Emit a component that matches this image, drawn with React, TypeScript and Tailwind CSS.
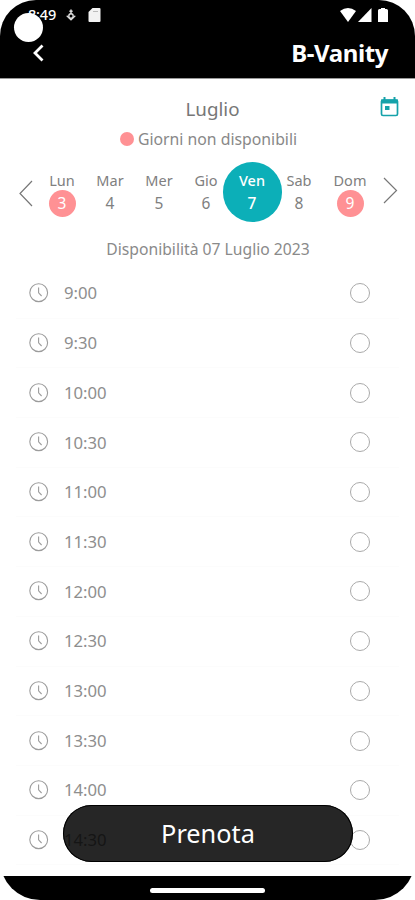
import React from "react";

type Day = { name: string; num: number; width: string; state?: "off" | "selected" };

const days: Day[] = [
  { name: "Lun", num: 3, width: "w-[48px]", state: "off" },
  { name: "Mar", num: 4, width: "w-[48px]" },
  { name: "Mer", num: 5, width: "w-[50px]" },
  { name: "Gio", num: 6, width: "w-[44px]" },
  { name: "Ven", num: 7, width: "w-[48px]", state: "selected" },
  { name: "Sab", num: 8, width: "w-[46px]" },
  { name: "Dom", num: 9, width: "w-[56px]", state: "off" },
];

const slots = ["9:00", "9:30", "10:00", "10:30", "11:00", "11:30", "12:00", "12:30", "13:00", "13:30", "14:00", "14:30"];

function StatusBar() {
  return (
    <div className="relative flex h-[30px] items-center pl-[28px] pr-[27px]">
      <span className="w-[29px] whitespace-nowrap pb-px text-[14.5px] leading-none font-medium tracking-[-0.2px]">8:49</span>
      <svg className="ml-[9px] h-[12px] w-[10px]" viewBox="0 0 10 12" fill="none" stroke="#ddd">
        <path d="M5 0.5V5M3.4 2.2h3.2" strokeWidth="1.5" />
        <circle cx="5" cy="7" r="2.2" strokeWidth="1.4" />
        <path d="M0.7 6.8L5 11L9.3 6.8" strokeWidth="1.2" />
      </svg>
      <svg className="ml-[12px] h-[14px] w-[13px]" viewBox="0 0 13 14">
        <path d="M4.5 0H11.5Q12.5 0 12.5 1V13Q12.5 14 11.5 14H1.5Q0.5 14 0.5 13V4Z" fill="#f2f2f2" />
        <path d="M5 3.5h5" stroke="#bbb" />
      </svg>
      <div className="ml-auto flex items-center">
        <svg className="h-[14px] w-[16px]" viewBox="0 0 16 14">
          <path d="M0 3Q8-3 16 3L8 14Z" fill="#fff" />
        </svg>
        <svg className="ml-[2px] h-[14px] w-[14px]" viewBox="0 0 14 14">
          <path d="M13.5 0V14H0Z" fill="#fff" />
        </svg>
        <svg className="ml-[6px] h-[14px] w-[10px]" viewBox="0 0 10 14">
          <path d="M3 0H7V1H8.5Q10 1 10 2.5V14H0V2.5Q0 1 1.5 1H3Z" fill="#fff" />
        </svg>
      </div>
      <div className="absolute left-[14px] top-[13px] h-[29px] w-[29px] rounded-full bg-white" />
    </div>
  );
}

function DayCell({ day }: { day: Day }) {
  const selected = day.state === "selected";
  return (
    <div className={`relative flex h-[60px] flex-col items-center ${day.width} ${selected ? "text-white" : "text-[#808080]"}`}>
      {selected && <div className="absolute left-[-5px] top-0 h-[60px] w-[59px] rounded-full bg-[#0cafb8]" />}
      <span className={`relative mt-[8px] text-[14.5px] leading-[20px] ${selected ? "font-medium" : ""}`}>{day.name}</span>
      <span
        className={`relative flex h-[27px] w-[27px] items-center justify-center rounded-full pt-px text-[15.5px] leading-none ${
          day.state === "off" ? "bg-[#ff9194] text-white" : ""
        } ${selected ? "font-medium" : ""}`}
      >
        {day.num}
      </span>
    </div>
  );
}

function SlotRow({ time }: { time: string }) {
  return (
    <div className="mx-[16px] flex h-[49.7px] items-center border-b border-[#fcfcfc] pl-[13px] pr-[29px]">
      <svg className="h-[20px] w-[20px]" viewBox="0 0 20 20" fill="none" stroke="#9c9c9c" strokeWidth="1.1">
        <circle cx="9.7" cy="9.7" r="8.9" />
        <path d="M9.6 4.5V9.8L12.6 13" />
      </svg>
      <span className="ml-[15px] pt-px text-[16.7px] leading-none text-[#8e8e8e]">{time}</span>
      <span className="ml-auto h-[20px] w-[20px] rounded-full border border-[#aaa]" />
    </div>
  );
}

export default function App() {
  return (
    <div className="h-[900px] w-[415px] bg-white font-['Noto_Sans','Open_Sans',sans-serif]">
      <div className="relative flex h-[900px] w-full flex-col overflow-hidden rounded-t-[36px] rounded-b-[40px] bg-white">
        <header className="h-[79px] shrink-0 border-b border-[#999] bg-black text-white">
          <StatusBar />
          <div className="flex h-[46px] items-center justify-between pl-[32px] pr-[27px]">
            <svg className="h-[18px] w-[12px]" viewBox="0 0 12 18" fill="none" stroke="#fff" strokeWidth="2.8">
              <path d="M10.5 1.5L3 9L10.5 16.5" />
            </svg>
            <h1 className="text-[24px] leading-none font-bold tracking-[-0.4px]">B-Vanity</h1>
          </div>
        </header>

        <main className="h-[797px] shrink-0 overflow-hidden">
          <div className="relative flex h-[47px] items-end justify-center">
            <h2 className="pb-[4px] pl-[10px] text-[18.8px] leading-[26px] text-[#777]">Luglio</h2>
            <svg className="absolute left-[380px] top-[18px] h-[20px] w-[19px]" viewBox="0 0 19 20">
              <path d="M4.5 0V4M14.5 0V4" stroke="#15a2aa" strokeWidth="2" />
              <rect x="1.5" y="3" width="16" height="15.5" rx="1.5" fill="none" stroke="#15a2aa" strokeWidth="1.7" />
              <path d="M1 2.5H18V6.5H1Z" fill="#15a2aa" />
              <rect x="5" y="9" width="4.5" height="4" fill="#15a2aa" />
            </svg>
          </div>
          <div className="flex h-[26px] items-center justify-center pl-[2px]">
            <span className="h-[14px] w-[14px] rounded-full bg-[#ff9194]" />
            <span className="ml-[4px] pt-px text-[15.8px] leading-none text-[#888]">Giorni non disponibili</span>
          </div>
          <div className="mt-[10px] flex h-[60px]">
            <svg className="ml-[18px] mt-[18px] h-[27px] w-[20px]" viewBox="0 0 20 27" fill="none" stroke="#777" strokeWidth="1.2">
              <path d="M14 1L2 13.5L14 26" />
            </svg>
            {days.map((d) => (
              <DayCell key={d.name} day={d} />
            ))}
            <svg className="ml-[4px] mt-[15px] h-[27px] w-[20px]" viewBox="0 0 20 27" fill="none" stroke="#777" strokeWidth="1.2">
              <path d="M2 1L14.5 13.5L2 26" />
            </svg>
          </div>
          <p className="mt-[15px] h-[24px] pl-px text-center text-[15.7px] leading-[24px] text-[#8a8a8a]">Disponibilità 07 Luglio 2023</p>
          <div className="mt-[8px]">
            {slots.map((t) => (
              <SlotRow key={t} time={t} />
            ))}
          </div>
        </main>

        <button className="absolute left-[63px] top-[805px] h-[57px] w-[290px] rounded-full bg-black/85 text-[25.3px] leading-none text-white inset-ring inset-ring-black">
          Prenota
        </button>

        <footer className="flex h-[24px] shrink-0 items-center justify-center bg-black pt-[4px]">
          <div className="h-[5px] w-[115px] rounded-full bg-white" />
        </footer>
      </div>
    </div>
  );
}
